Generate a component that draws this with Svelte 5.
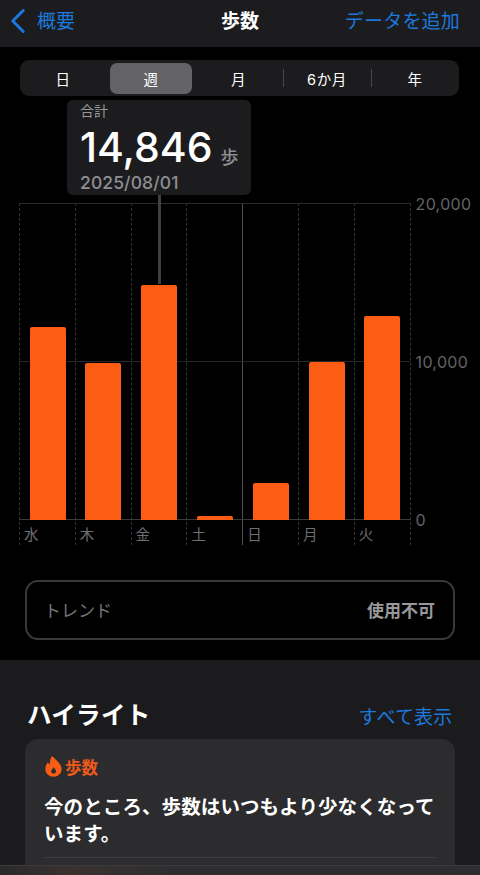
<script>
	const segments = ['日', '週', '月', '6か月', '年'];
	const selected = 1;

	// chart scale: 20,000 steps = 316px
	const days = [
		{ label: '水', value: 12200 },
		{ label: '木', value: 9880 },
		{ label: '金', value: 14846 },
		{ label: '土', value: 220 },
		{ label: '日', value: 2300 },
		{ label: '月', value: 10000 },
		{ label: '火', value: 12880 }
	];
	const barHeight = (v) => (v / 20000) * 316;
</script>

<div class="page">
	<header class="nav">
		<div class="back">
			<svg width="16" height="26" viewBox="0 0 16 26" fill="none">
				<path d="M13.2 2.5 L2.8 13 L13.2 23.5" stroke="#1c78dc" stroke-width="3" stroke-linecap="round" stroke-linejoin="round" />
			</svg>
			<span>概要</span>
		</div>
		<div class="nav-title">歩数</div>
		<div class="nav-action">データを追加</div>
	</header>

	<main class="main">
		<div class="segments">
			{#each segments as seg, i}
				<div class="seg" class:active={i === selected} class:sep={i >= 3}>{seg}</div>
			{/each}
		</div>

		<div class="chart-area">
			<div class="tooltip">
				<div class="tip-label">合計</div>
				<div class="tip-value">14,846<span class="tip-unit">歩</span></div>
				<div class="tip-date">2025/08/01</div>
			</div>
			<div class="pointer"></div>

			<div class="chart">
				<div class="plot">
					{#each days as d, i}
						<div class="col" class:solid={i === 4}>
							<div class="bar" style="height: {barHeight(d.value)}px"></div>
							<div class="day">{d.label}</div>
						</div>
					{/each}
					<div class="hline top"></div>
					<div class="hline mid"></div>
					<div class="hline base"></div>
				</div>
				<div class="axis">
					<span>20,000</span>
					<span>10,000</span>
					<span>0</span>
				</div>
			</div>
		</div>

		<div class="trend">
			<span>トレンド</span>
			<span class="trend-val">使用不可</span>
		</div>
	</main>

	<section class="highlights">
		<div class="hl-head">
			<h2>ハイライト</h2>
			<span class="hl-all">すべて表示</span>
		</div>
		<div class="card">
			<div class="card-tag">
				<svg width="17" height="21" viewBox="0 0 17 21">
					<path fill-rule="evenodd" d="M6.5 0.3 C9 1 10.5 3.5 12.8 5.8 C15.3 8.2 16.6 10.5 16.6 13 C16.6 17.6 13 20.7 8.5 20.7 C4 20.7 0.4 17.6 0.4 13 C0.4 10.2 1.4 8 3 6.2 C3.4 7.4 3.8 8 4.6 8.4 C5.2 5.5 5.2 3 6.5 0.3 Z M8.8 11.2 C8.2 12.6 6.2 13.4 6.2 15.2 C6.2 16.6 7.3 17.5 8.6 17.5 C9.9 17.5 11 16.6 11 15.2 C11 13.6 9.6 12.8 8.8 11.2 Z" fill="#fa5c14" />
				</svg>
				<span>歩数</span>
			</div>
			<p class="card-text">今のところ、歩数はいつもより少なくなっています。</p>
			<div class="card-div"></div>
		</div>
	</section>

	<div class="tabbar"></div>
</div>

<style>
	:global(body) {
		margin: 0;
		background: #000;
	}

	.page {
		position: relative;
		width: 480px;
		height: 875px;
		overflow: hidden;
		background: #000;
		color: #fff;
		font-family: Inter, "Noto Sans CJK JP", sans-serif;
	}

	.nav {
		display: flex;
		align-items: center;
		justify-content: space-between;
		position: relative;
		height: 47px;
		padding: 0 20px 9px 10px;
		box-sizing: border-box;
		background: #1c1c1e;
		font-size: 19px;
	}

	.back {
		display: flex;
		align-items: center;
		gap: 11px;
		color: #1c78dc;
	}

	.back svg {
		margin-top: 3px;
	}

	.nav-title {
		position: absolute;
		left: 221px;
		font-weight: 700;
		font-size: 19px;
	}

	.nav-action {
		color: #1c78dc;
		letter-spacing: 0.2px;
	}

	.main {
		padding-top: 13px;
	}

	.segments {
		display: grid;
		grid-template-columns: 90px 82px 91px 88px 88px;
		align-items: center;
		width: 439px;
		height: 36px;
		margin-left: 20px;
		border-radius: 9px;
		background: #1c1c1e;
	}

	.seg {
		position: relative;
		display: flex;
		align-items: center;
		justify-content: center;
		height: 31px;
		border-radius: 7px;
		font-size: 14.5px;
		font-weight: 400;
		letter-spacing: 0.6px;
	}

	.seg:first-child {
		padding-right: 4px;
	}

	.seg:nth-child(3) {
		padding-left: 2px;
	}

	.seg.active {
		background: #636366;
	}

	.seg.sep::before {
		content: '';
		position: absolute;
		left: 0;
		top: 6px;
		height: 18px;
		width: 1px;
		background: #48484a;
	}

	.chart-area {
		position: relative;
		padding-top: 107px;
	}

	.tooltip {
		position: absolute;
		z-index: 2;
		left: 67px;
		top: 4px;
		width: 184px;
		height: 95px;
		padding: 2px 13px;
		box-sizing: border-box;
		border-radius: 6px;
		background: #1c1c1e;
	}

	.tip-label {
		font-size: 14px;
		line-height: 18px;
		color: #98989d;
	}

	.tip-value {
		margin-top: 3.5px;
		font-size: 41px;
		line-height: 47px;
		font-weight: 500;
		white-space: nowrap;
	}

	.tip-unit {
		position: relative;
		top: 2px;
		margin-left: 8px;
		font-size: 18px;
		line-height: 0;
		font-weight: 500;
		color: #8e8e93;
	}

	.tip-date {
		margin-top: 1px;
		font-size: 17.5px;
		line-height: 22px;
		font-weight: 500;
		letter-spacing: 0.1px;
		color: #8e8e93;
	}

	.pointer {
		position: absolute;
		z-index: 1;
		left: 158px;
		top: 95px;
		width: 3px;
		height: 93px;
		background: #404042;
	}

	.chart {
		display: flex;
		margin-left: 19px;
	}

	.plot {
		position: relative;
		display: grid;
		grid-template-columns: repeat(7, 55.8px);
		height: 342px;
		border-right: 1px dashed #333335;
	}

	.col {
		position: relative;
		display: flex;
		flex-direction: column;
		justify-content: flex-end;
		align-items: center;
		height: 316.5px;
		padding-bottom: 25.5px;
		border-left: 1px dashed #333335;
		box-sizing: content-box;
	}

	.col.solid {
		border-left: 1px solid #505052;
	}

	.bar {
		position: relative;
		z-index: 1;
		width: 36px;
		margin-left: 0.5px;
		border-radius: 2px 2px 0 0;
		background: #fd5c14;
	}

	.day {
		position: absolute;
		left: 4px;
		bottom: 0;
		font-size: 14.5px;
		line-height: 20px;
		color: #6e6e73;
	}

	.hline {
		position: absolute;
		left: 0;
		right: 0;
		height: 1px;
		background: #262628;
	}

	.hline.top {
		top: 0;
		background: #2c2c2e;
	}

	.hline.mid {
		top: 158px;
	}

	.hline.base {
		top: 316px;
		background: #3a3a3c;
	}

	.axis {
		position: relative;
		flex: 1;
		font-size: 16px;
		color: #636366;
	}

	.axis span {
		position: absolute;
		left: 5px;
		line-height: 20px;
		letter-spacing: 0.3px;
	}

	.axis span:nth-child(1) {
		top: -9px;
	}

	.axis span:nth-child(2) {
		top: 149px;
	}

	.axis span:nth-child(3) {
		top: 307px;
	}

	.trend {
		display: flex;
		align-items: center;
		justify-content: space-between;
		width: 430px;
		height: 60px;
		margin: 35px 0 0 25px;
		padding: 0 18px 0 17px;
		box-sizing: border-box;
		border: 2px solid #39393b;
		border-radius: 13px;
		font-size: 17px;
		color: #77777b;
	}

	.trend span {
		margin-top: -2px;
	}

	.trend-val {
		font-weight: 700;
		color: #98989d;
	}

	.highlights {
		margin-top: 20px;
		height: 215px;
		padding: 0 25px;
		box-sizing: border-box;
		background: #1b1b1d;
	}

	.hl-head {
		display: flex;
		align-items: center;
		justify-content: space-between;
		height: 79px;
		padding: 28px 2.5px 0 2px;
		box-sizing: border-box;
	}

	.hl-head h2 {
		margin: 0;
		font-size: 24.5px;
		font-weight: 700;
		letter-spacing: 0.3px;
	}

	.hl-all {
		font-size: 19px;
		letter-spacing: 0.2px;
		color: #1c78dc;
		padding-top: 4px;
	}

	.card {
		height: 140px;
		padding: 17px 19px 0;
		box-sizing: border-box;
		border-radius: 13px;
		background: #2c2c2e;
	}

	.card-tag {
		display: flex;
		align-items: center;
		gap: 3px;
		height: 21px;
		font-size: 16.5px;
		font-weight: 700;
		color: #f05a1a;
	}

	.card-tag svg {
		margin-left: 1px;
	}

	.card-text {
		margin: 17px 0 0;
		font-size: 19.5px;
		line-height: 27px;
		font-weight: 700;
		letter-spacing: 0.1px;
	}

	.card-div {
		height: 1px;
		margin-top: 9px;
		background: #3e3e40;
	}

	.tabbar {
		position: absolute;
		left: 0;
		right: 0;
		bottom: 0;
		height: 9px;
		border-top: 1px solid #3c3c3e;
		background: linear-gradient(90deg, #2a2a2c, #3a322e 15%, #2e2e30 35%);
	}
</style>
